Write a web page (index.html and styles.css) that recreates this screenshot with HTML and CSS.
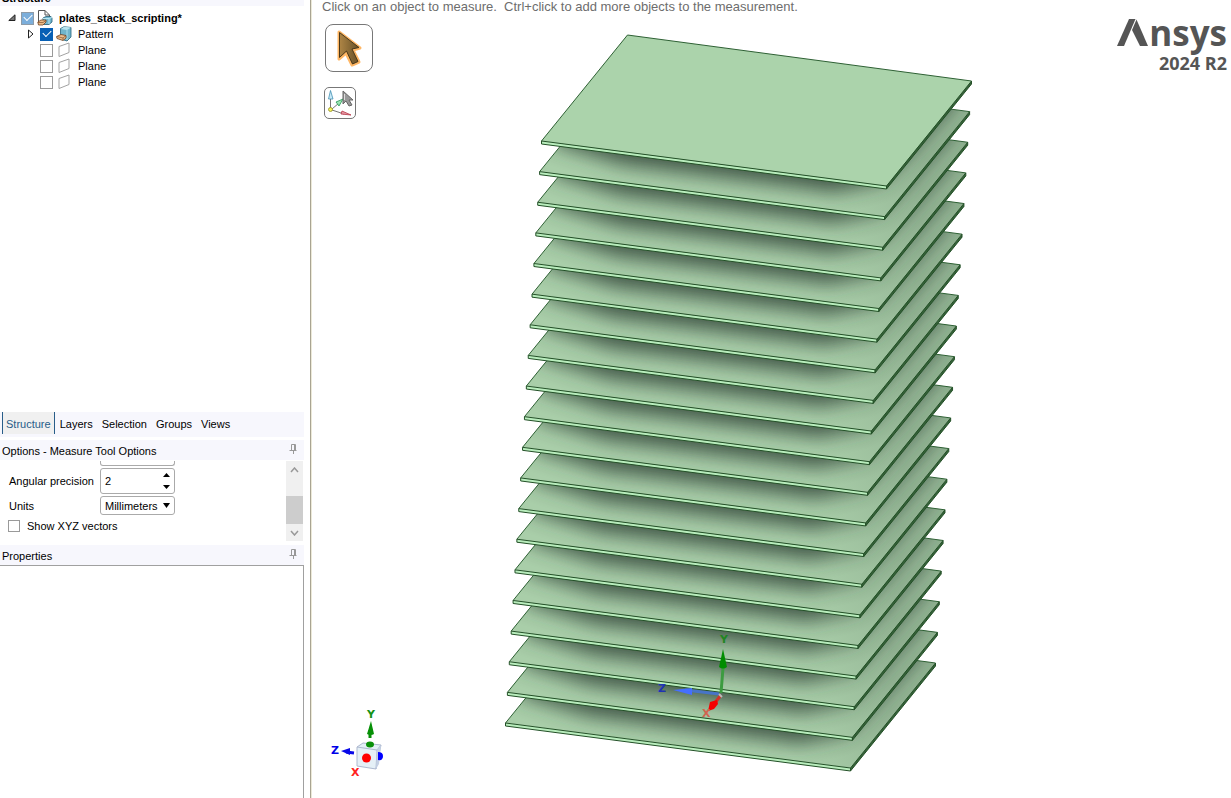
FILE: index.html
```html
<!DOCTYPE html>
<html lang="en">
<head>
<meta charset="utf-8">
<title>plates_stack_scripting</title>
<link rel="stylesheet" href="styles.css">
</head>
<body>
<main class="app">
  <aside class="sidebar">
    <section class="structure">
      <h2 class="panel-title cut"><span>Structure</span></h2>
      <ul class="tree">
        <li class="row root">
          <button class="expander" aria-label="Collapse"><svg width="8" height="8" viewBox="0 0 8 8"><path d="M7 .8V6.500H.8Z" fill="#777" stroke="#222"/></svg></button>
          <input class="check pale" type="checkbox" id="c0" checked>
          <label for="c0"><svg class="icon" width="16" height="16" viewBox="0 0 16 16"><path d="M1.500 13V.5H8L12.500 5V9" fill="#fff" stroke="#555"/><path d="M8 .5V5H12" fill="none" stroke="#555"/><path d="M6 8L9 6.500H14L15 8V12L12 14.500H6Z" fill="#72b6ce" stroke="#245d75" stroke-width=".8"/><path d="M6 8.500H12L15 7.500M12 9V14" fill="none" stroke="#b9e6f2"/><path d="M.8 12L4 10H9V12L6 15H1.500Z" fill="#eebc88" stroke="#70411f" stroke-width=".8"/><path d="M1 12.500H6L9 10.500" fill="none" stroke="#70411f" stroke-width=".6"/></svg><span>plates_stack_scripting*</span></label>
        </li>
        <li class="row child">
          <button class="expander" aria-label="Expand"><svg width="8" height="10" viewBox="0 0 8 10"><path d="M1.500 1L6 5L1.500 9Z" fill="#fff" stroke="#222"/></svg></button>
          <input class="check" type="checkbox" id="c1" checked>
          <label for="c1"><svg class="icon" width="16" height="16" viewBox="0 0 16 16"><path d="M4.500 2.500L8 .7L15 1.500V11L11 15L4.500 13Z" fill="#70b5cc" stroke="#27627b" stroke-width=".8"/><path d="M5 3L11 4L15 1.500L8 .7Z" fill="#b8e4ef"/><path d="M11 4V14" stroke="#a9dcea"/><path d="M.5 10.500L5 8.500L10 9.500V12L7 14.500L1 12.500Z" fill="#edbd8c" stroke="#70411f" stroke-width=".8"/><path d="M1 10.500L7 12L10 9.500M7 12V14" fill="none" stroke="#70411f" stroke-width=".6"/></svg><span>Pattern</span></label>
        </li>
        <li class="row child"><i class="expander"></i><input class="check" type="checkbox" id="c2"><label for="c2"><svg class="icon" width="16" height="16" viewBox="0 0 16 16"><path d="M3 4.500L13 1V10.500L3 14.500Z" fill="#fff" stroke="#a3a3a3"/></svg><span>Plane</span></label></li>
        <li class="row child"><i class="expander"></i><input class="check" type="checkbox" id="c3"><label for="c3"><svg class="icon" width="16" height="16" viewBox="0 0 16 16"><path d="M3 4.500L13 1V10.500L3 14.500Z" fill="#fff" stroke="#a3a3a3"/></svg><span>Plane</span></label></li>
        <li class="row child"><i class="expander"></i><input class="check" type="checkbox" id="c4"><label for="c4"><svg class="icon" width="16" height="16" viewBox="0 0 16 16"><path d="M3 4.500L13 1V10.500L3 14.500Z" fill="#fff" stroke="#a3a3a3"/></svg><span>Plane</span></label></li>
      </ul>
    </section>
    <nav class="tabs">
      <button class="tab active">Structure</button><button class="tab">Layers</button><button class="tab">Selection</button><button class="tab">Groups</button><button class="tab">Views</button>
    </nav>
    <section class="options">
      <h2 class="panel-title"><span>Options - Measure Tool Options</span><button class="pin" aria-label="Pin options"><svg width="8" height="10" viewBox="0 0 8 10"><path d="M2.500 6V.5H6.500V6M5.500 1V6M.5 6.500H7.500M4.500 6V10" fill="none" stroke="#999"/></svg></button></h2>
      <div class="options-body">
        <form class="fields">
          <div class="stub"></div>
          <div class="field"><label for="precision">Angular precision</label><span class="spinner"><input id="precision" type="text" value="2"><span class="steps"><button type="button" aria-label="Increase"><svg width="7" height="4"><path d="M0 4L3.500 0L7 4Z"/></svg></button><button type="button" aria-label="Decrease"><svg width="7" height="4"><path d="M0 0H7L3.500 4Z"/></svg></button></span></span></div>
          <div class="field units"><label for="units">Units</label><span class="select"><select id="units"><option>Millimeters</option></select><svg width="7" height="5"><path d="M0 0H7L3.500 5Z"/></svg></span></div>
          <div class="vectors"><input class="check small" type="checkbox" id="xyz"><label for="xyz">Show XYZ vectors</label></div>
        </form>
        <div class="scrollbar">
          <button aria-label="Scroll up"><svg width="9" height="6"><path d="M1 5L4.500 1L8 5" fill="none" stroke="#999" stroke-width="1.500"/></svg></button>
          <div class="thumb"></div>
          <button aria-label="Scroll down"><svg width="9" height="6"><path d="M1 1L4.500 5L8 1" fill="none" stroke="#999" stroke-width="1.500"/></svg></button>
        </div>
      </div>
    </section>
    <section class="properties">
      <h2 class="panel-title"><span>Properties</span><button class="pin" aria-label="Pin properties"><svg width="8" height="10" viewBox="0 0 8 10"><path d="M2.500 6V.5H6.500V6M5.500 1V6M.5 6.500H7.500M4.500 6V10" fill="none" stroke="#999"/></svg></button></h2>
      <div class="properties-body"></div>
    </section>
  </aside>
  <section class="viewport">
    <svg class="scene" width="920" height="798" viewBox="311 0 920 798" role="img" aria-label="Stack of plates">
      <defs>
        <linearGradient id="face" gradientUnits="userSpaceOnUse" x1="830" y1="180" x2="910" y2="110"><stop offset="0" stop-color="#a9cea9"/><stop offset="1" stop-color="#92b393"/></linearGradient>
        <filter id="soft" x="-20%" y="-30%" width="140%" height="160%"><feGaussianBlur stdDeviation="10"/></filter>
        <clipPath id="top"><path d="M627 35L971 81L886 186L541 141Z"/></clipPath>
      </defs>
      <g id="plates"></g>
      <g class="axes" font-size="11">
        <path d="M719 694L685 690" stroke="#4774c8" stroke-width="3"/><path d="M673 690L692 688V695Z" fill="#456fff"/>
        <path d="M721 693L723 668" stroke="#3c9b40" stroke-width="3"/><path d="M723 649L719 667Q723 670 727 667Z" fill="#008d00"/>
        <path d="M721 695L714 704" stroke="#d43227" stroke-width="3"/><path d="M708 711L710 702L717 700L718 704L714 709Z" fill="#f50000"/>
        <path d="M719 694L722 697" stroke="#bbb" stroke-width="2"/>
        <text x="720" y="643" fill="#228522">Y</text><text x="658" y="692" fill="#2032b4">Z</text><text x="702" y="717" fill="#d26450">X</text>
      </g>
      <g class="axes" font-size="11">
        <text x="367" y="718" fill="#159215">Y</text><text x="331" y="754" fill="#0000e8">Z</text><text x="351" y="776" fill="#f22">X</text>
        <path d="M370 738V730" stroke="#079007" stroke-width="3"/><path d="M371 721L367 734Q371 736 374 734Z" fill="#079007"/>
        <path d="M346 752L354 753" stroke="#0808e8" stroke-width="3"/><path d="M341 751L350 748V755Z" fill="#0808e8"/>
        <path d="M357 747L363 743L381 745L376 769L357 766Z" fill="#e5f0f7" stroke="#aeb9d0"/><path d="M357 747L377 750L381 745M377 750L376 769" fill="none" stroke="#aeb9d0"/><path d="M377 750L381 745L379 764L376 769Z" fill="#c4d0e4"/>
        <path d="M378 752Q383 752 383 756Q383 761 378 760Z" fill="#00f"/>
        <ellipse cx="370" cy="744.500" rx="4" ry="3" fill="#0a900a"/><circle cx="366.500" cy="758" r="4.500" fill="#f00"/>
      </g>
    </svg>
    <p class="hint">Click on an object to measure.&nbsp; Ctrl+click to add more objects to the measurement.</p>
    <div class="tools">
      <button class="tool large" aria-label="Select"><svg width="46" height="46" viewBox="0 0 46 46"><defs><linearGradient id="gold"><stop offset="0" stop-color="#ae8545"/><stop offset="1" stop-color="#675027"/></linearGradient></defs><path d="M13 7L34 23L27 25L33 37L26 40L20 28L13 34Z" fill="url(#gold)" stroke="#ffb765" stroke-width="3" stroke-linejoin="round"/><path d="M13.500 7.500L33 22.500L26 24L32 36.500L26.500 39L20.500 26L13.500 32.500Z" fill="url(#gold)" stroke="#493719"/></svg></button>
      <button class="tool" aria-label="Select by axes"><svg width="30" height="30" viewBox="0 0 30 30"><path d="M5.500 21V10M7 21L14 15M7 22L19 26" stroke="#777"/><path d="M5.500 2.500L3.500 11H8Z" fill="#c9eaf8" stroke="#4490b2" stroke-width=".8"/><path d="M18 11L11 14L14 18Z" fill="#9be6b3" stroke="#279553" stroke-width=".8"/><path d="M26 27L17 23L16 26Z" fill="#e79aa4" stroke="#b63346" stroke-width=".8"/><circle cx="5.500" cy="21.500" r="2" fill="#f5f35a" stroke="#969222" stroke-width=".8"/><path d="M18 3L28 12L24 12L27 17L24 18L21 13L18 16Z" fill="#999" stroke="#666"/><path d="M19.500 6V12" stroke="#ddd"/></svg></button>
    </div>
    <div class="brand"><div class="logo" aria-label="Ansys"><svg width="32" height="27" viewBox="0 0 32 27"><path d="M0 27L12 0H18.500L7 27Z" fill="#555"/><path d="M19.500 .5L31 27H23L15 11Z" fill="#555"/></svg><span>nsys</span></div><div class="release">2024 R2</div></div>
  </section>
</main>
<script src="plates.js"></script>
</body>
</html>
```
FILE: styles.css
```css
* { box-sizing: border-box; }
body { margin: 0; background: #fff; color: #000; font: 11px/16px "Liberation Sans", Arial, sans-serif; }
button, input, select { font: inherit; color: inherit; margin: 0; padding: 0; border: 0; background: none; }
h2, ul, p { margin: 0; padding: 0; font-size: 11px; font-weight: 400; }
.app { display: flex; height: 100vh; overflow: hidden; }
.sidebar { display: flex; flex-direction: column; width: 311px; flex: none; padding-right: 6px; border-right: 1px solid #a9a492; }
.structure { flex: 0 0 412px; overflow: hidden; }
.panel-title { display: flex; align-items: center; justify-content: space-between; height: 20px; padding: 1px 7px 0 2px; background: #f7f7fd; }
.cut { height: 6px; align-items: flex-end; font-weight: 700; overflow: hidden; }
.tree { list-style: none; padding-top: 4px; }
.row { display: flex; align-items: center; height: 16px; }
.root { padding-left: 5px; font-weight: 700; }
.child { padding-left: 24px; }
.expander { width: 16px; display: flex; align-items: center; justify-content: center; flex: none; padding-right: 3px; }
.check { appearance: none; width: 13px; height: 13px; border: 1px solid #9a9a9a; background: #fff; flex: none; display: grid; place-items: center; }
.check:checked { background: #0860b5; border-color: #0860b5; }
.check.pale:checked { background: #7baedb; border-color: #8e9ba7; }
.check:checked::before { content: ""; width: 7px; height: 4px; border: solid #fff; border-width: 0 0 1px 1px; transform: rotate(-45deg); margin-bottom: 3px; }
.row label { display: flex; align-items: center; gap: 6px; padding-left: 3px; }
.icon { flex: none; }
.tabs { display: flex; gap: 1px; height: 25px; flex: none; background: #f7f7fd; padding-left: 2px; align-items: flex-start; }
.tab { height: 22px; padding: 2px 4px 0; white-space: nowrap; }
.tab.active { color: #285d89; background: #f0f0f0; border: solid #285d89; border-width: 0 1px; padding: 2px 3px 0; }
.options { padding-top: 3px; flex: none; }
.options-body { display: flex; justify-content: space-between; padding: 1px 1px 0 0; height: 81px; }
.fields { width: 200px; padding-left: 8px; }
.stub { width: 75px; height: 5px; margin: 0 0 2px 92px; border: 1px solid #aaa; border-top: 0; border-radius: 0 0 3px 3px; }
.field { display: flex; align-items: center; margin-bottom: 2px; }
.field label { width: 92px; padding-left: 1px; white-space: nowrap; }
.spinner, .select { display: flex; align-items: center; width: 75px; height: 26px; border: 1px solid #aaa; border-radius: 3px; background: #fff; padding: 0 4px; }
.spinner input { width: 58px; height: 22px; }
.steps { display: flex; flex-direction: column; gap: 8px; }
.steps button { display: flex; height: 4px; }
.select { height: 19px; justify-content: space-between; }
.select select { appearance: none; width: 58px; }
.vectors { display: flex; align-items: center; gap: 7px; padding-top: 1px; }
.check.small { width: 12px; height: 12px; }
.scrollbar { width: 17px; height: 80px; display: flex; flex-direction: column; background: #f0f0f0; }
.scrollbar button { height: 17px; display: grid; place-items: center; }
.scrollbar button:first-child { height: 35px; padding-bottom: 17px; }
.thumb { flex: 1; background: #cdcdcd; }
.properties { display: flex; flex-direction: column; flex: 1; padding-top: 4px; }
.properties-body { flex: 1; border: solid #a0a0a0; border-width: 1px 1px 0 0; }
.pin { height: 14px; display: flex; align-items: flex-start; }
.viewport { position: relative; flex: 1; overflow: hidden; border-left: 1px solid #ece9d8; }
.scene { position: absolute; left: -1px; top: 0; }
.axes { font-family: "DejaVu Sans", sans-serif; font-weight: 700; }
.plate-side { fill: #b9edbd; stroke: #235027; stroke-width: 1; }
.plate-end { fill: #356138; stroke: #235027; stroke-width: 1; }
.plate-line { fill: none; stroke: #2e6034; stroke-width: 1; }
.hint { position: relative; padding: 0 0 0 10px; line-height: 13px; color: #6d6d6d; font-size: 13px; white-space: nowrap; }
.tools { position: relative; display: flex; flex-direction: column; align-items: center; width: 62px; padding: 11px 0 0; gap: 15px; }
.tool { display: grid; place-items: center; width: 32px; height: 32px; margin-left: 12px; background: #fff; border: 1px solid #777; border-radius: 5px; align-self: flex-start; flex: none; }
.tool.large { width: 48px; height: 48px; margin-left: 13px; border-radius: 8px; }
.brand { position: absolute; right: 4px; top: 19px; color: #555; text-align: right; font-family: "Open Sans", sans-serif; font-weight: 700; }
.logo { display: flex; font-size: 35px; line-height: 28px; height: 27px; }
.release { font-size: 18px; line-height: 20px; padding-top: 7px; }
```
FILE: plates.js
```js
const group = document.getElementById('plates');
const count = 20;
let markup = '';
// Drawn from the bottom plate up so that each one covers the one below.
for (let i = count - 1; i >= 0; i--) {
  const x = 0.5 - 36 * i / (count - 1);
  const y = 582 * i / (count - 1);
  const shade = i === 0 ? '' : `<g clip-path="url(#top)"><path d="M640 20L964 62L884 150L835 161L625 134L550 111Z" fill="#2e4134" opacity=".84" filter="url(#soft)"/></g>`;
  markup += `<g transform="translate(${x} ${y})">
    <path d="M627 35L971 81L886 186L541 141Z" fill="${i ? 'url(#face)' : '#abd3ab'}"/>${shade}
    <path class="plate-line" d="M541 141L627 35L971 81"/>
    <path class="plate-side" d="M541 141L886 186V189L541 144Z"/>
    <path class="plate-end" d="M886 186L971 81V84L886 189Z"/>
  </g>`;
}
group.innerHTML = markup;
```
